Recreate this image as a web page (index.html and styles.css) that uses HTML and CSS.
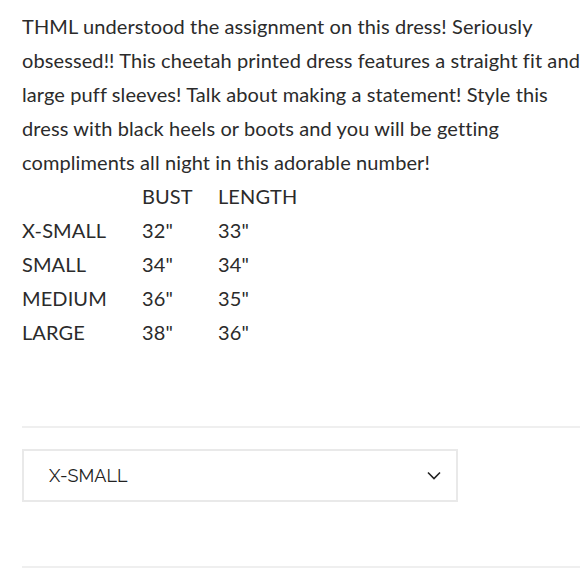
FILE: index.html
```
<!DOCTYPE html>
<html>
<head>
<meta charset="utf-8">
<link rel="stylesheet" href="styles.css">
</head>
<body>
<div class="page">
  <p class="desc">THML understood the assignment on this dress! Seriously<br>obsessed!! This cheetah printed dress features a straight fit and<br>large puff sleeves! Talk about making a statement! Style this<br>dress with black heels or boots and you will be getting<br>compliments all night in this adorable number!</p>
  <table class="sizes">
    <tr><td></td><td>BUST</td><td>LENGTH</td></tr>
    <tr><td>X-SMALL</td><td>32"</td><td>33"</td></tr>
    <tr><td>SMALL</td><td>34"</td><td>34"</td></tr>
    <tr><td>MEDIUM</td><td>36"</td><td>35"</td></tr>
    <tr><td>LARGE</td><td>38"</td><td>36"</td></tr>
  </table>
  <hr class="rule rule-top">
  <div class="select">
    <span class="select-label">X-SMALL</span>
    <svg class="chevron" width="14" height="9" viewBox="0 0 14 9"><path d="M1 1.5 L7 7.5 L13 1.5" fill="none" stroke="#222" stroke-width="1.6"/></svg>
  </div>
  <hr class="rule rule-bottom">
</div>
</body>
</html>
```
FILE: styles.css
```
html, body {
  margin: 0;
  padding: 0;
  background: #fff;
  overflow: hidden;
}
.page {
  padding-left: 22px;
  font-family: Lato, "Open Sans", sans-serif;
  color: #2b2b2b;
  font-size: 20px;
  letter-spacing: 0.1px;
  font-variant-ligatures: none;
}
.desc {
  margin: 9px 0 0 0;
  line-height: 34px;
  white-space: nowrap;
  overflow: hidden;
}
.sizes {
  border-collapse: collapse;
  font-size: 20px;
}
.sizes td {
  padding: 0;
  height: 34px;
  line-height: 34px;
  vertical-align: middle;
}
.sizes td:nth-child(1) { width: 120px; }
.sizes td:nth-child(2) { width: 76px; }
.rule {
  border: 0;
  height: 2px;
  background: #efefef;
  margin: 0;
}
.rule-top { margin-top: 77px; }
.select {
  margin-top: 21px;
  width: 436px;
  height: 53px;
  border: 2px solid #e9e9e9;
  display: flex;
  align-items: center;
  justify-content: space-between;
  padding: 0 15px 0 25px;
  box-sizing: border-box;
  font-family: Raleway, Lato, sans-serif;
  font-size: 18px;
  letter-spacing: 0;
  color: #222;
}
.rule-bottom { margin-top: 64px; }
```
